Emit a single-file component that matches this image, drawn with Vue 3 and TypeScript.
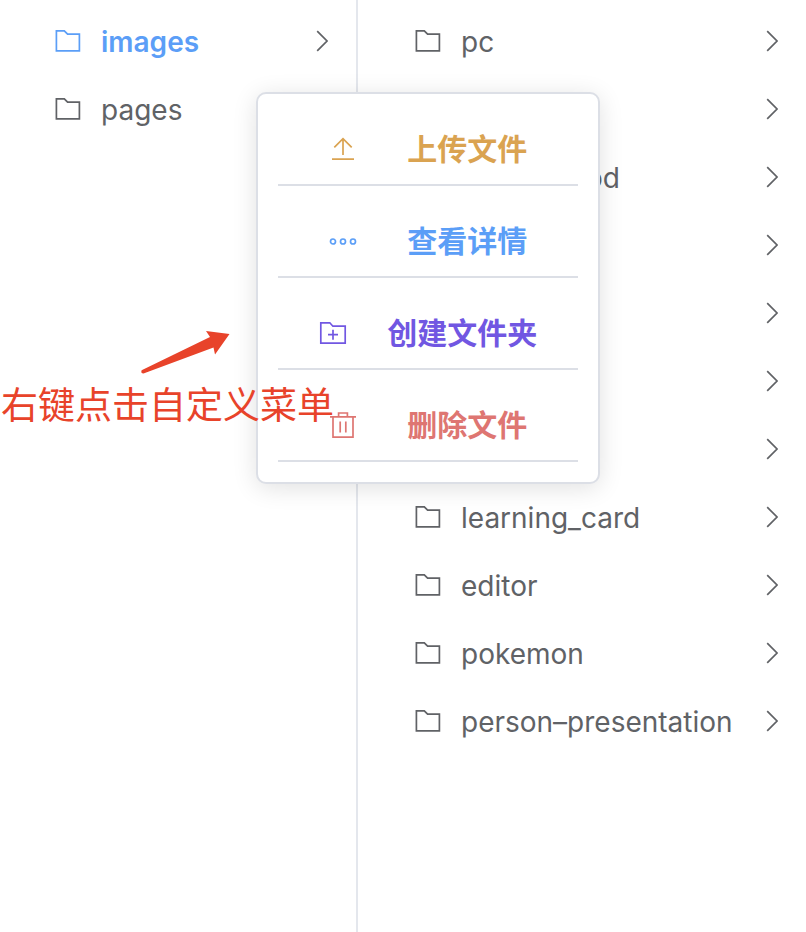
<script setup lang="ts">
interface Folder {
  name: string
  active?: boolean
  expandable: boolean
  trailing?: boolean
}

interface MenuAction {
  key: 'upload' | 'detail' | 'create' | 'remove'
  label: string
}

const roots: Folder[] = [
  { name: 'images', active: true, expandable: true },
  { name: 'pages', expandable: false },
]

const children: Folder[] = [
  { name: 'pc', expandable: true },
  { name: '', expandable: true },
  { name: 'od', expandable: true, trailing: true },
  { name: '', expandable: true },
  { name: '', expandable: true },
  { name: '', expandable: true },
  { name: '', expandable: true },
  { name: 'learning_card', expandable: true },
  { name: 'editor', expandable: true },
  { name: 'pokemon', expandable: true },
  { name: 'person–presentation', expandable: true },
]

const columns: Folder[][] = [roots, children]

const actions: MenuAction[] = [
  { key: 'upload', label: '上传文件' },
  { key: 'detail', label: '查看详情' },
  { key: 'create', label: '创建文件夹' },
  { key: 'remove', label: '删除文件' },
]
</script>

<template>
  <main class="browser">
    <ul v-for="(column, c) in columns" :key="c" class="column">
      <li v-for="(folder, i) in column" :key="i">
        <button type="button" class="row" :class="{ active: folder.active }">
          <svg class="icon" viewBox="0 0 28 28" aria-hidden="true">
            <path d="M2.4 3.8h7.9l3.3 3.4h11.8v16.6H2.4z" />
          </svg>
          <span class="name" :class="{ trailing: folder.trailing }">{{ folder.name }}</span>
          <svg v-if="folder.expandable" class="chevron" viewBox="0 0 12 28" aria-hidden="true">
            <path d="M1.2 4.2 11 14 1.2 23.8" />
          </svg>
        </button>
      </li>
    </ul>

    <div class="menu" role="menu">
      <button
        v-for="action in actions"
        :key="action.key"
        type="button"
        role="menuitem"
        class="action"
        :class="action.key"
      >
        <svg class="icon" viewBox="0 0 28 28" aria-hidden="true">
          <path v-if="action.key === 'upload'" d="M14 20V3.600M5.300 12.400 14 3.600l8.700 8.800M3 24.200h22" />
          <g v-else-if="action.key === 'detail'">
            <circle cx="4" cy="14.5" r="2.5" />
            <circle cx="14" cy="14.5" r="2.5" />
            <circle cx="24" cy="14.5" r="2.5" />
          </g>
          <path
            v-else-if="action.key === 'create'"
            d="M1.8 3.8h9l3.1 3.4h12.3v17H1.8zM14 10.7v10M9 15.7h10"
          />
          <path v-else d="M1 5.8h26M9.6 5.8V2h8.8v3.8M4 5.8v20.4h20V5.8M11.2 10.5v11M16.8 10.5v11" />
        </svg>
        <span class="label">{{ action.label }}</span>
      </button>
    </div>

    <div class="note">
      <svg class="pointer" viewBox="0 0 90 44" aria-hidden="true">
        <path d="M1.6 40.2 70 7 66 1l23.500 3L75 24.500 73.500 17.500 3.500 43.500Q.5 43.500 1.600 40.200Z" />
      </svg>
      <p>右键点击自定义菜单</p>
    </div>
  </main>
</template>

<style>
body {
  margin: 0;
  background: #fff;
}
</style>

<style scoped>
.browser {
  position: relative;
  display: grid;
  grid-template-columns: 358px 1fr;
  min-height: 100vh;
  overflow: hidden;
  color: #606266;
  font-family: Inter, "Noto Sans CJK SC", sans-serif;
}

.column {
  margin: 0;
  padding: 7px 0;
  list-style: none;
}

.column:first-child {
  border-right: 2px solid #e4e7ed;
}

button {
  border: 0;
  background: none;
  color: inherit;
  font: inherit;
  cursor: pointer;
}

.row {
  display: flex;
  align-items: center;
  width: 100%;
  height: 68px;
  padding: 0 28px 0 56px;
  font-size: 28px;
  text-align: left;
}

.column:first-child .row {
  padding-left: 54px;
}

.row.active {
  color: #5b9ef7;
  font-weight: 600;
}

.icon,
.chevron {
  flex: none;
  width: 28px;
  height: 28px;
  fill: none;
  stroke: currentColor;
  stroke-width: 1.7;
}

.chevron {
  width: 12px;
  margin-left: auto;
  color: #606266;
}

.name {
  padding-top: 1px;
  margin-left: 19px;
}

.name.trailing {
  width: 159px;
  text-align: right;
}

.menu {
  position: absolute;
  top: 92px;
  left: 256px;
  box-sizing: border-box;
  width: 344px;
  padding: 0 20px 20px;
  border: 2px solid #dcdfe6;
  border-radius: 10px;
  background: #fff;
  box-shadow: 0 4px 24px rgba(0, 0, 0, 0.12);
}

.action {
  display: flex;
  align-items: center;
  justify-content: space-evenly;
  box-sizing: border-box;
  width: 100%;
  height: 92px;
  padding: 20px 0 0;
  border-bottom: 2px solid #dcdfe6;
  font-size: 30px;
  font-weight: 700;
}

.label {
  padding-bottom: 4px;
}

.upload {
  color: #daa351;
}

.detail {
  color: #5b9ef7;
}

.create {
  color: #7157e2;
}

.remove {
  color: #de7672;
}

.note {
  position: absolute;
  top: 330px;
  left: 1px;
  color: #e8432a;
  pointer-events: none;
}

.pointer {
  display: block;
  width: 90px;
  height: 44px;
  margin-left: 139px;
  fill: currentColor;
}

.note p {
  margin: 8px 0 0;
  font-size: 37px;
  line-height: 48px;
  white-space: nowrap;
}
</style>
